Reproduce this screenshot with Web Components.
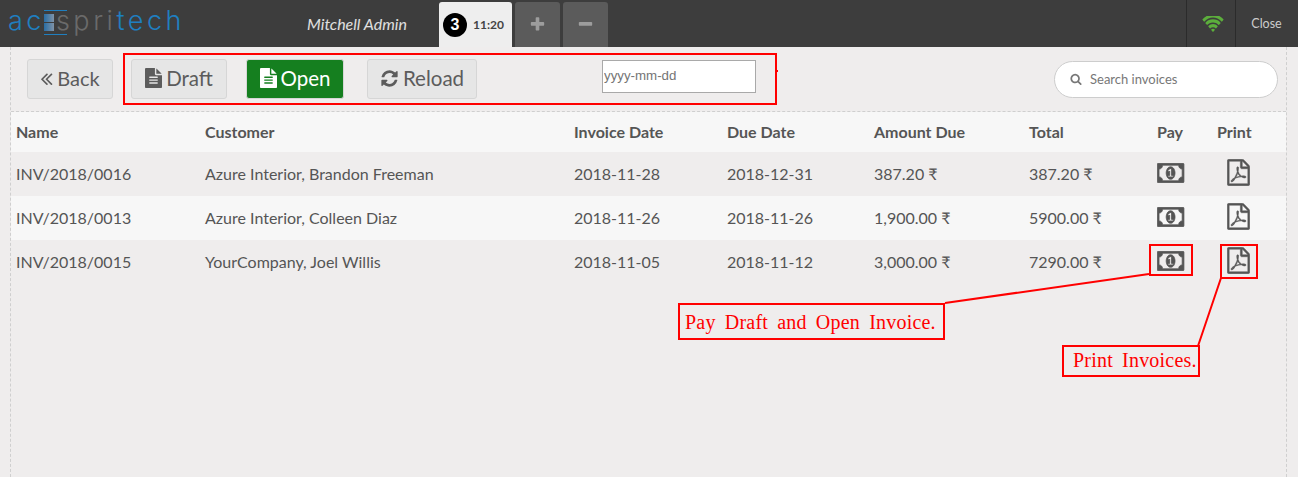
<!DOCTYPE html>
<html>
<head>
<meta charset="utf-8">
<title>Invoices</title>
<style>
  html, body { margin: 0; height: 100%; background: #efeded; overflow: hidden; }
  body { font-family: Lato, "Liberation Sans", sans-serif; color: #555; }
</style>
</head>
<body>
<pos-shell>
  <pos-header slot="header" cashier="Mitchell Admin" orders="3" time="11:20"></pos-header>
  <invoice-toolbar slot="toolbar"></invoice-toolbar>
  <invoice-table slot="table">
    <invoice-row name="INV/2018/0016" customer="Azure Interior, Brandon Freeman" date="2018-11-28" due="2018-12-31" amount="387.20 ₹" total="387.20 ₹"></invoice-row>
    <invoice-row name="INV/2018/0013" customer="Azure Interior, Colleen Diaz" date="2018-11-26" due="2018-11-26" amount="1,900.00 ₹" total="5900.00 ₹"></invoice-row>
    <invoice-row name="INV/2018/0015" customer="YourCompany, Joel Willis" date="2018-11-05" due="2018-11-12" amount="3,000.00 ₹" total="7290.00 ₹"></invoice-row>
  </invoice-table>
  <screen-notes slot="notes"></screen-notes>
</pos-shell>

<script>
const ICONS = {
  back: ['0 0 1792 1792', 'M1011 1376q0 13-10 23l-50 50q-10 10-23 10t-23-10l-466-466q-10-10-10-23t10-23l466-466q10-10 23-10t23 10l50 50q10 10 10 23t-10 23l-393 393 393 393q10 10 10 23zm384 0q0 13-10 23l-50 50q-10 10-23 10t-23-10l-466-466q-10-10-10-23t10-23l466-466q10-10 23-10t23 10l50 50q10 10 10 23t-10 23l-393 393 393 393q10 10 10 23z'],
  file: ['128 0 1536 1792', 'M1596 476q14 14 28 36h-472v-472q22 14 36 28zm-476 164h544v1056q0 40-28 68t-68 28h-1344q-40 0-68-28t-28-68v-1600q0-40 28-68t68-28h800v544q0 40 28 68t68 28zm160 736v-64q0-14-9-23t-23-9h-704q-14 0-23 9t-9 23v64q0 14 9 23t23 9h704q14 0 23-9t9-23zm0-256v-64q0-14-9-23t-23-9h-704q-14 0-23 9t-9 23v64q0 14 9 23t23 9h704q14 0 23-9t9-23zm0-256v-64q0-14-9-23t-23-9h-704q-14 0-23 9t-9 23v64q0 14 9 23t23 9h704q14 0 23-9t9-23z'],
  reload: ['0 0 1792 1792', 'M1639 1056q0 5-1 7-64 268-268 434.5t-478 166.5q-146 0-282.5-55t-243.5-157l-129 129q-19 19-45 19t-45-19-19-45v-448q0-26 19-45t45-19h448q26 0 45 19t19 45-19 45l-137 137q71 66 161 102t187 36q134 0 250-65t186-179q11-17 53-117 8-23 30-23h192q13 0 22.5 9.5t9.5 22.5zm25-800v448q0 26-19 45t-45 19h-448q-26 0-45-19t-19-45 19-45l138-138q-148-137-349-137-134 0-250 65t-186 179q-11 17-53 117-8 23-30 23h-199q-13 0-22.5-9.5t-9.5-22.5v-7q65-268 270-434.5t480-166.5q146 0 284 55.5t245 156.5l130-129q19-19 45-19t45 19 19 45z'],
  search: ['0 0 1792 1792', 'M1216 832q0-185-131.5-316.5t-316.5-131.5-316.5 131.5-131.5 316.5 131.5 316.5 316.5 131.5 316.5-131.5 131.5-316.5zm512 832q0 52-38 90t-90 38q-54 0-90-38l-343-342q-179 124-399 124-143 0-273.5-55.5t-225-150-150-225-55.5-273.5 55.5-273.5 150-225 225-150 273.5-55.5 273.5 55.5 225 150 150 225 55.5 273.5q0 220-124 399l343 343q37 37 37 90z'],
  plus: ['0 0 1792 1792', 'M1600 736v192q0 40-28 68t-68 28h-416v416q0 40-28 68t-68 28h-192q-40 0-68-28t-28-68v-416h-416q-40 0-68-28t-28-68v-192q0-40 28-68t68-28h416v-416q0-40 28-68t68-28h192q40 0 68 28t28 68v416h416q40 0 68 28t28 68z'],
  minus: ['0 0 1792 1792', 'M1600 736v192q0 40-28 68t-68 28h-1216q-40 0-68-28t-28-68v-192q0-40 28-68t68-28h1216q40 0 68 28t28 68z'],
  wifi: ['0 256 2048 1280', 'M1024 1523q-20 0-93-73.5t-73-93.5q0-32 62.5-54t103.5-22 103.5 22 62.5 54q0 20-73 93.5t-93 73.5zm270-271q-2 0-40-25t-101.5-50-128.5-25-128.5 25-101 50-40.5 25q-18 0-93.5-75t-75.5-93q0-13 10-23 78-77 196-121t233-44 233 44 196 121q10 10 10 23 0 18-75.5 93t-93.5 75zm273-272q-11 0-23-8-136-105-252-154.5t-268-49.5q-85 0-170.5 22t-149 53-113.5 62-79 53-31 22q-17 0-92-75t-75-93q0-12 10-22 132-132 320-205t380-73 380 73 320 205q10 10 10 22 0 18-75 93t-92 75zm271-271q-11 0-22-9-179-157-371.5-236.5t-420.5-79.5-420.5 79.5-371.5 236.5q-11 9-22 9-17 0-92.5-75t-75.5-93q0-13 10-23 187-186 445-288t527-102 527 102 445 288q10 10 10 23 0 18-75.5 93t-92.5 75z'],
  money: ['-20 236 2088 1320', 'M768 1152h384v-96h-128v-448h-114l-148 137 77 80q42-37 55-57h2v288h-128v96zm512-256q0 70-21 142t-59.5 134-101.5 101-138 39-138-39-101.5-101-59.5-134-21-142 21-142 59.5-134 101.5-101 138-39 138 39 101.5 101 59.5 134 21 142zm512 256v-512q-106 0-181-75t-75-181h-1152q0 106-75 181t-181 75v512q106 0 181 75t75 181h1152q0-106 75-181t181-75zm128-832v1152q0 26-19 45t-45 19h-1792q-26 0-45-19t-19-45v-1152q0-26 19-45t45-19h1792q26 0 45 19t19 45z', 50],
  pdf: ['108 -20 1576 1832', 'M1596 380q28 28 48 76t20 88v1152q0 40-28 68t-68 28h-1344q-40 0-68-28t-28-68v-1600q0-40 28-68t68-28h896q40 0 88 20t76 48zm-444-244v376h376q-10-29-22-41l-313-313q-12-12-41-22zm384 1528v-1024h-416q-40 0-68-28t-28-68v-416h-768v1536h1280zm-514-593q33 26 84 56 59-7 117-7 147 0 177 49 16 22 2 52 0 1-1 2l-2 2v1q-6 38-71 38-48 0-115-20t-130-53q-221 24-392 83-153 262-242 262-15 0-28-7l-24-12q-1-1-6-5-10-10-6-36 9-40 56-91.5t132-96.5q14-9 23 6 2 2 2 4 52-85 107-197 68-136 104-262-24-82-30.5-159.5t6.5-127.5q11-40 42-40h22q23 0 35 15 18 21 9 68-2 6-4 8 1 3 1 8v30q-2 123-14 192 55 164 146 238zm-576 411q52-24 137-158-51 40-87.5 84t-49.5 74zm398-920q-15 42-2 132 1-7 7-44 0-3 7-43 1-4 4-8-1-1-1-2-1-2-1-3-1-22-13-36 0 1-1 2v2zm-124 661q135-54 284-81-2-1-13-9.5t-16-13.5q-76-67-127-176-27 86-83 197-30 56-45 83zm646-16q-24-24-140-24 76 28 124 28 14 0 18-1 0-1-2-3z', 36]
};

function icon(name, w, h) {
  const [box, d, stroke] = ICONS[name];
  const extra = stroke ? ` stroke="currentColor" stroke-width="${stroke}"` : '';
  return `<svg width="${w}" height="${h}" viewBox="${box}" preserveAspectRatio="none" fill="currentColor" style="display:block;flex:none"><path d="${d}"${extra}/></svg>`;
}

class PosShell extends HTMLElement {
  constructor() {
    super();
    this.attachShadow({ mode: 'open' });
    this.shadowRoot.innerHTML = `
      <style>
        :host { display: block; position: relative; width: 1298px; height: 477px; overflow: hidden; }
        .screen {
          height: 430px;
          margin: 0 11px 0 10px;
          border-left: 1px dashed #cfcfcf;
          border-right: 1px dashed #cfcfcf;
        }
      </style>
      <slot name="header"></slot>
      <div class="screen">
        <slot name="toolbar"></slot>
        <slot name="table"></slot>
      </div>
      <slot name="notes"></slot>
    `;
  }
}

class PosHeader extends HTMLElement {
  constructor() {
    super();
    this.attachShadow({ mode: 'open' });
  }

  connectedCallback() {
    this.shadowRoot.innerHTML = `
      <style>
        :host {
          display: flex;
          height: 47px;
          background: #3d3d3d;
          color: #ddd;
          font-family: Lato, sans-serif;
        }
        .logo {
          width: 299px;
          box-sizing: border-box;
          padding: 0 0 0 8px;
          font: 300 27px/41px Inter, sans-serif;
          letter-spacing: 3.5px;
          color: #1f7fc0;
          white-space: nowrap;
        }
        .logo .grey { color: #6a6a6a; }
        .logo .mark {
          position: relative;
          display: inline-block;
          width: 10px;
          height: 17px;
          margin: 0 2px 0 -1px;
          vertical-align: -1px;
          background:
            linear-gradient(#3d3d3d, #3d3d3d) 0 8px / 100% 1px no-repeat,
            linear-gradient(90deg, #2a6ea5, #7f93a8);
        }
        /* thin rules above and below the mark */
        .logo .mark::after {
          content: '';
          position: absolute;
          left: 0; top: -4px;
          width: 23px; height: 23px;
          border-top: 1px solid #1f7fc0;
          border-bottom: 1px solid #1f7fc0;
        }
        .cashier { width: 132px; padding-left: 8px; font-style: italic; font-size: 16px; line-height: 47px; color: #e0e0e0; }
        .tabs { display: flex; gap: 3px; padding-top: 2px; }
        .order {
          display: flex; align-items: center; gap: 6px;
          width: 73px; box-sizing: border-box; padding-left: 4px;
          background: #eee; border-radius: 3px 3px 0 0;
          color: #444; font-size: 12px; font-weight: 700;
        }
        .count {
          width: 24px; height: 24px; border-radius: 50%;
          background: #000; color: #fff;
          font: 700 16px/24px "Liberation Sans", sans-serif; text-align: center;
        }
        .tab {
          display: flex; align-items: center; justify-content: center;
          width: 45px; background: #5b5b5b; color: #9d9d9d;
          border-radius: 3px 3px 0 0;
        }
        .right { margin-left: auto; display: flex; }
        .cell {
          display: flex; align-items: center; justify-content: center;
          border-left: 1px solid #2b2b2b; height: 47px;
        }
        .wifi { width: 49px; color: #5cae3c; box-sizing: border-box; padding-left: 4px; }
        .close { width: 63px; font-size: 12.5px; color: #ccc; box-sizing: border-box; padding-right: 1px; }
      </style>
      <div class="logo">ac<span class="mark"></span><span class="grey">spri</span>tech</div>
      <div class="cashier">${this.getAttribute('cashier')}</div>
      <div class="tabs">
        <div class="order"><span class="count">${this.getAttribute('orders')}</span><span>${this.getAttribute('time')}</span></div>
        <div class="tab">${icon('plus', 17, 17)}</div>
        <div class="tab">${icon('minus', 17, 17)}</div>
      </div>
      <div class="right">
        <div class="cell wifi">${icon('wifi', 22, 16)}</div>
        <div class="cell close">Close</div>
      </div>
    `;
  }
}

class ToolButton extends HTMLElement {
  constructor() {
    super();
    this.attachShadow({ mode: 'open' });
  }

  connectedCallback() {
    const w = this.getAttribute('icon-width');
    const h = this.getAttribute('icon-height');
    this.shadowRoot.innerHTML = `
      <style>
        :host {
          display: flex; align-items: center; justify-content: center; gap: 4px;
          box-sizing: border-box; height: 40px; padding-bottom: 2px;
          background: #e6e6e6; border: 1px solid #d6d6d6; border-radius: 3px;
          color: #5c5c5c; font-size: 20.5px;
        }
        :host([primary]) { background: #157f1f; border-color: #d6d6d6; color: #fff; }
      </style>
      ${icon(this.getAttribute('icon'), w, h)}<slot></slot>
    `;
  }
}

class InvoiceToolbar extends HTMLElement {
  constructor() {
    super();
    this.attachShadow({ mode: 'open' });
    this.shadowRoot.innerHTML = `
      <style>
        :host {
          display: flex; align-items: flex-start;
          height: 65px; box-sizing: border-box;
          border-bottom: 1px dashed #cfcfcf;
          padding: 6px 8px 0 16px;
        }
        .actions {
          display: flex; align-items: flex-start;
          box-sizing: border-box; width: 654px; height: 52px;
          margin-left: 10px; padding: 4px 6px;
          border: 2px solid #f00;
        }
        .back { width: 86px; margin-top: 6px; gap: 0; padding-right: 4px; font-size: 20px; }
        .draft { width: 96px; }
        .open { width: 98px; margin-left: 19px; }
        .reload { width: 110px; margin-left: 23px; }
        input {
          box-sizing: border-box; width: 154px; height: 33px;
          margin: 1px 0 0 125px; padding: 0 0 2px 1px;
          background: #fff; border: 1px solid #a9a9a9; border-radius: 0;
          font: 13.3px "Liberation Sans", sans-serif;
        }
        input::placeholder { color: #757575; opacity: 1; }
        .search {
          display: flex; align-items: center; gap: 8px;
          box-sizing: border-box; width: 224px; height: 37px;
          margin: 8px 0 0 auto; padding: 0 0 2px 15px;
          background: #fff; border: 1px solid #cdcdcd; border-radius: 19px;
          color: #777; font-size: 13px;
        }
      </style>
      <tool-button class="back" icon="back" icon-width="21" icon-height="21">Back</tool-button>
      <div class="actions">
        <tool-button class="draft" icon="file" icon-width="17" icon-height="20">Draft</tool-button>
        <tool-button class="open" icon="file" icon-width="17" icon-height="20" primary>Open</tool-button>
        <tool-button class="reload" icon="reload" icon-width="19" icon-height="19">Reload</tool-button>
        <input type="text" placeholder="yyyy-mm-dd">
      </div>
      <div class="search">${icon('search', 12, 12)}<span>Search invoices</span></div>
    `;
  }
}

const COLUMNS = 'grid-template-columns: 189px 369px 153px 147px 155px 128px 60px 1fr;';

class InvoiceTable extends HTMLElement {
  constructor() {
    super();
    this.attachShadow({ mode: 'open' });
    this.shadowRoot.innerHTML = `
      <style>
        :host { display: block; font-size: 16px; }
        .head {
          display: grid; ${COLUMNS}
          align-items: center; box-sizing: border-box; height: 40px; padding: 0 0 2px 5px;
          background: #f7f7f7; font-weight: 700; color: #555;
        }
        ::slotted(invoice-row:nth-of-type(even)) { background: #f7f7f7; }
      </style>
      <div class="head">
        <span>Name</span><span>Customer</span><span>Invoice Date</span><span>Due Date</span>
        <span>Amount Due</span><span>Total</span><span>Pay</span><span>Print</span>
      </div>
      <slot></slot>
    `;
  }
}

class InvoiceRow extends HTMLElement {
  constructor() {
    super();
    this.attachShadow({ mode: 'open' });
  }

  connectedCallback() {
    const a = n => this.getAttribute(n);
    this.shadowRoot.innerHTML = `
      <style>
        :host {
          display: grid; ${COLUMNS}
          align-items: center; box-sizing: border-box; height: 44px; padding: 0 0 2px 5px;
          font-size: 16px; color: #555;
        }
        .action { padding-bottom: 1px; }
        .pdf { margin-left: 10px; }
      </style>
      <span>${a('name')}</span><span>${a('customer')}</span><span>${a('date')}</span><span>${a('due')}</span>
      <span>${a('amount')}</span><span>${a('total')}</span>
      <span class="action">${icon('money', 29, 20)}</span>
      <span class="action pdf">${icon('pdf', 23, 27)}</span>
    `;
  }
}

// red annotations drawn over the screenshot
class ScreenNotes extends HTMLElement {
  constructor() {
    super();
    this.attachShadow({ mode: 'open' });
    this.shadowRoot.innerHTML = `
      <style>
        :host { position: absolute; inset: 0; display: block; pointer-events: none; }
        svg { position: absolute; inset: 0; }
        .note {
          position: absolute; box-sizing: border-box;
          border: 2px solid #f00; color: #f00;
          font: 20px/34px "Liberation Serif", serif;
          letter-spacing: .2px; word-spacing: 4px; white-space: nowrap;
        }
        .pay { left: 678px; top: 303px; width: 267px; height: 37px; padding-left: 5px; }
        .print { left: 1062px; top: 345px; width: 138px; height: 32px; padding-left: 9px; line-height: 27px; }
      </style>
      <svg width="1298" height="477" fill="none" stroke="#f00" stroke-width="2">
        <rect x="1150" y="245" width="42" height="30"/>
        <rect x="1221" y="245" width="36" height="33"/>
        <path d="M945 303 1149 274M1221 278 1198 346M777 71h1"/>
      </svg>
      <div class="note pay">Pay Draft and Open Invoice.</div>
      <div class="note print">Print Invoices.</div>
    `;
  }
}

customElements.define('pos-shell', PosShell);
customElements.define('pos-header', PosHeader);
customElements.define('tool-button', ToolButton);
customElements.define('invoice-toolbar', InvoiceToolbar);
customElements.define('invoice-table', InvoiceTable);
customElements.define('invoice-row', InvoiceRow);
customElements.define('screen-notes', ScreenNotes);
</script>
</body>
</html>
